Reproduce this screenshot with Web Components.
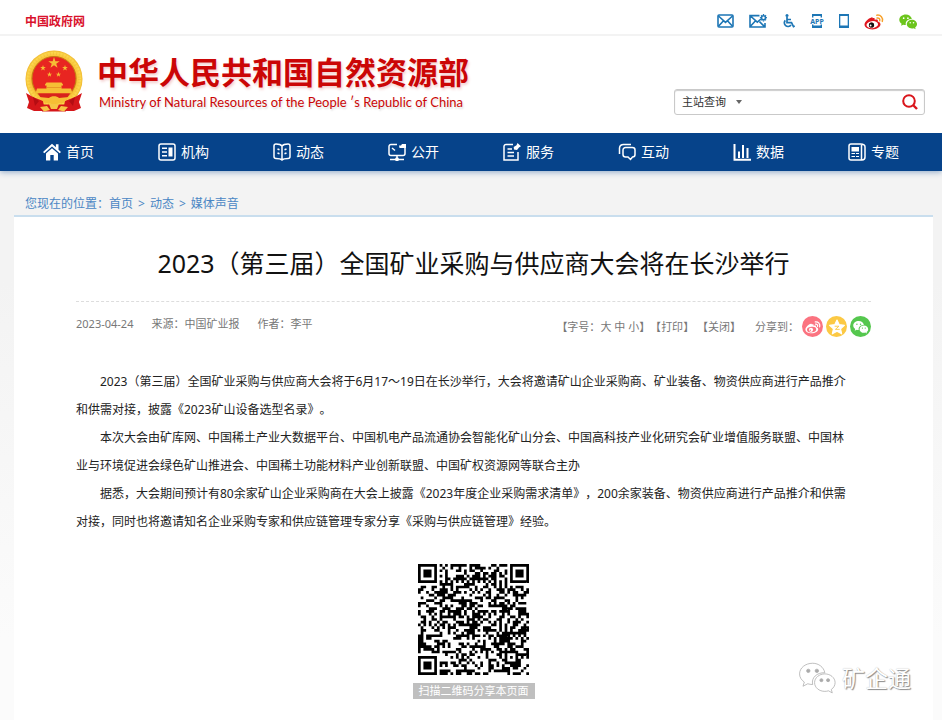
<!DOCTYPE html>
<html lang="zh-CN">
<head>
<meta charset="utf-8">
<title>2023(第三届)全国矿业采购与供应商大会将在长沙举行</title>
<style>
body {
    margin: 0;
    min-height: 100vh;
    display: flex;
    flex-direction: column;
    background: #f3f3f3;
    font: 12px/20px "Noto Sans", "Noto Sans CJK SC", sans-serif;
    color: #333;
    text-spacing-trim: space-all;
}
page-content { flex: 1; }
</style>
</head>
<body>
<top-bar></top-bar>
<site-header></site-header>
<main-nav>
    <nav-item icon="home">首页</nav-item>
    <nav-item icon="org">机构</nav-item>
    <nav-item icon="book">动态</nav-item>
    <nav-item icon="open">公开</nav-item>
    <nav-item icon="service">服务</nav-item>
    <nav-item icon="chat">互动</nav-item>
    <nav-item icon="data">数据</nav-item>
    <nav-item icon="topic">专题</nav-item>
</main-nav>
<page-content>
    <news-article>
        <span slot="title">2023（第三届）全国矿业采购与供应商大会将在长沙举行</span>
        <article-meta slot="meta"></article-meta>
        <article-text>2023（第三届）全国矿业采购与供应商大会将于6月17～19日在长沙举行，大会将邀请矿山企业采购商、矿业装备、物资供应商进行产品推介<br>和供需对接，披露《2023矿山设备选型名录》。</article-text>
        <article-text>本次大会由矿库网、中国稀土产业大数据平台、中国机电产品流通协会智能化矿山分会、中国高科技产业化研究会矿业增值服务联盟、中国林<br>业与环境促进会绿色矿山推进会、中国稀土功能材料产业创新联盟、中国矿权资源网等联合主办</article-text>
        <article-text>据悉，大会期间预计有80余家矿山企业采购商在大会上披露《2023年度企业采购需求清单》，200余家装备、物资供应商进行产品推介和供需<br>对接，同时也将邀请知名企业采购专家和供应链管理专家分享《采购与供应链管理》经验。</article-text>
        <qr-code slot="qr">扫描二维码分享本页面</qr-code>
        <wechat-mark slot="mark">矿企通</wechat-mark>
    </news-article>
</page-content>

<script>
const wechatShape = (bubble, eye) => `
    <path fill="${bubble}" d="M7.2 1C3.3 1 .3 3.5.3 6.6c0 1.8 1 3.3 2.5 4.3l-.7 2.2 2.5-1.3c.8.2 1.6.4 2.6.4-.9-3.6 2.3-6.4 6.4-6.2C13 3 10.3 1 7.2 1z"/>
    <path fill="${bubble}" d="M19 11.2c0-2.6-2.5-4.6-5.4-4.6s-5.4 2-5.4 4.6 2.4 4.6 5.4 4.6c.7 0 1.3-.1 1.9-.3l2 1.100-.5-1.800c1.200-.8 2-2.100 2-3.600z"/>
    <g fill="${eye}"><circle cx="4.9" cy="5" r=".9"/><circle cx="9.4" cy="5" r=".9"/><circle cx="11.8" cy="9.9" r=".8"/><circle cx="15.3" cy="9.9" r=".8"/></g>`;

const weiboShape = (body, inner, wave) => `
    <path fill="${body}" d="M8.5 5.3c1.5-.6 2.6-.1 2.2 1.6 1.9-.7 3.7-.4 3.1 1.5 1.7.5 2.7 1.5 2.7 2.9 0 2.7-3.6 5.1-8.100 5.100S.5 14.300.5 11.500c0-2.400 3.800-6.400 7-7.100 1-.2 1.300.3 1 .9z"/>
    <ellipse cx="8.3" cy="11.7" rx="5.8" ry="3.5" fill="${inner}" transform="rotate(-7 8 12)"/>
    <circle cx="7.5" cy="12" r="2.6" fill="${body}"/>
    <circle cx="6.6" cy="12.6" r=".9" fill="${inner}"/>
    <path fill="none" stroke="${wave}" stroke-width="1.5" stroke-linecap="round" d="M12.8 2.2c3.8-.6 6.6 2.5 5.5 6.2M13.1 5c1.8-.4 3.1 1 2.6 2.7"/>`;

const topIcons = [
    ['邮箱', 17, '0 0 17 14', `<g fill="none" stroke="#1d76b5" stroke-width="1.6"><rect x="1" y="1" width="15" height="12" rx="1"/><path d="M1.5 2 8.5 8.3l7-6.3M1.5 12.3 6.3 7M15.5 12.3 10.7 7"/></g>`],
    ['邮箱设置', 18, '0 0 18 14', `<g fill="none" stroke="#1d76b5" stroke-width="1.6"><path d="M10.5 1.6H1V13h15V9M1.5 2l6.8 6.2L12 5M1.5 12.3 6.3 7M15.3 12.3 10.5 7.7"/><circle cx="14.5" cy="3.7" r="2"/><path stroke-width="1.3" d="M14.5 0v1M14.5 6.5v1M10.9 3.7h1M17.1 3.7h1M12 1.2l.7.7M16.3 5.5l.7.7M12 6.2l.7-.7M16.3 1.9l.7-.7"/></g>`],
    ['无障碍', 13, '0 0 13 14', `<circle cx="5" cy="1.5" r="1.5" fill="#1d76b5"/><g fill="none" stroke="#1d76b5" stroke-width="1.7"><path d="M5 3v5.6h4.5l2 4 1.3-.6M5 5.500h4M3.300 6.300A3.700 3.700 0 1 0 9 11"/></g>`],
    ['手机应用', 14, '0 0 14 14', `<g fill="none" stroke="#1d76b5" stroke-width="1.4"><path d="M2.7 3.5V.8h8.6v2.7M2.7 10.5v2.7h8.6v-2.7"/></g><path fill="#1d76b5" d="M2 11.5h10V14H2zM2 0h10v2H2z"/><text x="7" y="9.500" text-anchor="middle" font-family="Noto Sans, sans-serif" font-size="7" font-weight="700" fill="#1d76b5">APP</text>`],
    ['手机版', 10, '0 0 10 14', `<path fill="#1d76b5" fill-rule="evenodd" d="M0 0h10v14H0zM1.3 2v9.5h7.4V2z"/>`],
    ['微博', 20, '0 0 20 17', weiboShape('#e0161e', '#fff', '#f7a12b') + '<circle cx="7.5" cy="12" r="2.6" fill="#111"/><circle cx="6.6" cy="12.5" r=".9" fill="#fff"/>'],
    ['微信', 19, '0 0 20 17', wechatShape('#6cc51c', '#fff')]
];

class TopBar extends HTMLElement {
    constructor() {
        super();
        this.attachShadow({ mode: 'open' }).innerHTML = `
        <style>
        :host {
            display: flex;
            justify-content: space-between;
            align-items: center;
            height: 36px;
            padding: 8px 24px 0 25px;
            box-sizing: border-box;
            background: #fff;
            border-bottom: 2px solid #f3f3f3;
        }
        a { text-decoration: none; }
        .gov { font-family: "Noto Sans CJK SC", sans-serif; font-weight: 600; color: #d9122c; }
        .icons { display: flex; align-items: center; gap: 15px; }
        .icons a { display: flex; }
        </style>
        <a class="gov" href="#">中国政府网</a>
        <div class="icons">
            ${topIcons.map(([label, w, box, shape]) => `
            <a href="#" aria-label="${label}"><svg width="${w}" height="${box.split(' ')[3]}" viewBox="${box}">${shape}</svg></a>`).join('')}
        </div>`;
    }
}
customElements.define('top-bar', TopBar);

class NationalEmblem extends HTMLElement {
    constructor() {
        super();
        const star = 'M0-1 .23-.31.95-.31.37.12.59.81 0 .39-.59.81-.37.12-.95-.31-.23-.31z';
        this.attachShadow({ mode: 'open' }).innerHTML = `
        <style>
        :host { display: block; }
        svg { display: block; }
        </style>
        <svg width="58" height="62" viewBox="0 0 58 62" role="img" aria-label="国徽">
            <defs>
                <radialGradient id="gold"><stop offset=".74" stop-color="#d9991a"/><stop offset=".82" stop-color="#f9c53a"/><stop offset=".93" stop-color="#fcd84e"/><stop offset="1" stop-color="#efb52c"/></radialGradient>
            </defs>
            <circle cx="29" cy="29" r="28.5" fill="url(#gold)"/>
            <circle cx="29" cy="29" r="25.5" fill="none" stroke="#e7a827" stroke-width="3" stroke-dasharray="1 2.2" opacity=".3"/>
            <circle cx="29" cy="28.5" r="22" fill="#e82521" stroke="#c57b14"/>
            <g fill="#f6be35">
                <path d="${star}" transform="translate(29 13) scale(6)"/>
                <path d="${star}" transform="translate(18 18) scale(3)"/>
                <path d="${star}" transform="translate(40 18) scale(3)"/>
                <path d="${star}" transform="translate(24.5 24.5) scale(2.8)"/>
                <path d="${star}" transform="translate(33.5 24.5) scale(2.8)"/>
                <path d="M20 34.500l1.500-2h15l1.500 2v1h-1.500v3H46l1.500 5h-37l1.500-5h9.500v-3H20z"/>
            </g>
            <path d="M21.500 37.500h15" stroke="#e28a20" stroke-width=".7"/>
            <path fill="#d8221c" d="M13 43.500h32l-4 6H17z"/>
            <path fill="#d5161a" d="M1 43l7 4 10 4 2 10H9l-7-3 2-6zM57 43l-7 4-10 4-2 10h11l7-3-2-6z"/>
            <path fill="#b50d12" d="M8 47l6 4-4 5zM50 47l-6 4 4 5z"/>
            <path fill="#f6be35" d="M14 47l10 1c2-2.500 8-2.500 10 0l10-1-6 6h-5c-2 2-6 2-8 0h-5z"/>
            <path fill="#d5161a" d="M17 54.500h24v7H17z"/>
            <path fill="#f6c545" d="M15 57l7-1 3 4-6 1.500zM43 57l-7-1-3 4 6 1.500zM24 54h10l-2 5h-6z"/>
        </svg>`;
    }
}
customElements.define('national-emblem', NationalEmblem);

class SearchBox extends HTMLElement {
    constructor() {
        super();
        this.attachShadow({ mode: 'open' }).innerHTML = `
        <style>
        :host { display: block; width: 251px; }
        form {
            display: flex;
            align-items: center;
            height: 26px;
            margin: 0;
            box-sizing: border-box;
            background: #fff;
            border: 1px solid #c9c9c9;
            border-radius: 3px;
            box-shadow: inset 0 1px 1px #ccc;
        }
        .pick { display: flex; align-items: center; padding-left: 7px; }
        select {
            appearance: none;
            border: none;
            outline: none;
            padding: 0;
            width: 54px;
            background: none;
            font: 11px/20px "Noto Sans", "Noto Sans CJK SC", sans-serif;
            color: #333;
        }
        .arrow {
            border: 3px solid transparent;
            border-top: 4px solid #666;
            border-bottom: none;
            pointer-events: none;
        }
        input { flex: 1; min-width: 0; border: none; outline: none; background: none; }
        button { display: flex; border: none; background: none; padding: 0 6px; }
        </style>
        <form>
            <label class="pick"><select aria-label="查询范围"><option>主站查询</option></select><span class="arrow"></span></label>
            <input type="text" aria-label="关键词">
            <button type="button" aria-label="搜索"><svg width="16" height="16" viewBox="0 0 16 16"><g fill="none" stroke="#d9151b" stroke-width="2"><circle cx="7" cy="7" r="5.8"/><path stroke-width="2.4" d="M11 11l4 4"/></g></svg></button>
        </form>`;
    }
}
customElements.define('search-box', SearchBox);

class SiteHeader extends HTMLElement {
    constructor() {
        super();
        this.attachShadow({ mode: 'open' }).innerHTML = `
        <style>
        :host {
            display: flex;
            justify-content: space-between;
            align-items: flex-start;
            padding: 14px 17px 0 25px;
            height: 97px;
            box-sizing: border-box;
            background: #fff;
        }
        .logo { display: flex; gap: 14px; color: #cb0606; white-space: nowrap; }
        h1 {
            margin: 0;
            font: bold 31px/42px "Noto Sans CJK SC", sans-serif;
            text-shadow: 1px 2px 3px #f3cccc;
        }
        p {
            margin: 0;
            padding-left: 2px;
            font: 13px/20px Lato, sans-serif;
            text-shadow: 1px 2px 2px #ddd;
        }
        search-box { margin-top: 39px; }
        </style>
        <div class="logo">
            <national-emblem></national-emblem>
            <div>
                <h1>中华人民共和国自然资源部</h1>
                <p>Ministry of Natural Resources of the People ′s Republic of China</p>
            </div>
        </div>
        <search-box></search-box>`;
    }
}
customElements.define('site-header', SiteHeader);

const navIcons = {
    home: '<path fill="#fff" stroke="none" d="M9 .8 0 9l1.3 1.3L9 3.5l7.7 6.8L18 9l-2.5-2.3V1.2h-2.6v3.1z"/><path fill="#fff" stroke="none" d="M9 5.2 3 10.5V17.5h4.3V12h3.4v5.5H15v-7z"/>',
    org: '<rect x="1" y="1" width="16" height="16" rx="2"/><path d="M4 5.2h5M4 9h5M4 12.8h5"/><path fill="#fff" stroke="none" d="M10.5 4.5h4v9h-4z"/>',
    book: '<path d="M9 3C7.500 1 5 1 3 1a2 2 0 0 0-2 2v10.500a2 2 0 0 0 2 2c2 0 4.500 0 6 1.500 1.500-1.500 4-1.500 6-1.500a2 2 0 0 0 2-2V3a2 2 0 0 0-2-2c-2 0-4.500 0-6 2zM9 3v14M4.500 6l2 .8M4.500 10l2 .8M13.500 6l-2 .8M13.500 10l-2 .8"/>',
    open: '<path d="M9 1.5H3a2 2 0 0 0-2 2v7a2 2 0 0 0 2 2h12a2 2 0 0 0 2-2V5M4 5l3 2.5M9 13v3M2 16.500h14"/><path fill="#fff" stroke="none" d="M11 2.500h2l1-1.500h4v4h-6.500z"/><circle cx="9" cy="16.3" r="1.2" fill="#fff"/>',
    service: '<path d="M10 1.500H3a2 2 0 0 0-2 2V17h14V9M4.500 6H9M4.500 9.500h6.500M4.500 13h6.500"/><path fill="#fff" stroke="none" d="M14.500 0l3.500 3.300-2 1.200-2 2.500-3-.5-.3-2.500 2.800-1.700z"/>',
    chat: '<path d="M1.5 11V5a4 4 0 0 1 4-3.5H13"/><path d="M7.5 4.5h7A2.5 2.5 0 0 1 17 7v4.500a2.500 2.500 0 0 1-2.500 2.500L12.500 16.500 10 14H7.500A2.500 2.500 0 0 1 5 11.500V7a2.500 2.500 0 0 1 2.500-2.500z"/>',
    data: '<path stroke-width="2" d="M1.5 1v15.8H18M6 8.500V15M10 2v13M14.500 5v10"/>',
    topic: '<path d="M12.500 1H3a2 2 0 0 0-2 2v12a2 2 0 0 0 2 2h11a3 3 0 0 0 3-3V4c0-2-2-3-4.500-3M13.500 1v16"/><path fill="#fff" stroke="none" d="M3.500 4h7.500v4.500H3.500zM3.500 10H7v1H3.500zM8 10h3v1H8zM3.500 13H7v1H3.500zM8 13h3v1H8z"/>'
};

class NavItem extends HTMLElement {
    constructor() {
        super();
        this.attachShadow({ mode: 'open' }).innerHTML = `
        <style>
        :host { display: block; }
        a {
            display: flex;
            justify-content: center;
            align-items: center;
            gap: 5px;
            height: 38px;
            color: #fff;
            font-size: 14px;
            text-decoration: none;
        }
        svg { fill: none; stroke: #fff; stroke-width: 1.5; }
        </style>
        <a href="#"><svg width="18" height="18" viewBox="0 0 18 18">${navIcons[this.getAttribute('icon')]}</svg><slot></slot></a>`;
    }
}
customElements.define('nav-item', NavItem);

class MainNav extends HTMLElement {
    constructor() {
        super();
        this.attachShadow({ mode: 'open' }).innerHTML = `
        <style>
        :host {
            display: block;
            position: relative;
            padding: 0 11px;
            background: #06438a;
            box-shadow: 0 1px 6px #8ba6c6;
            clip-path: inset(0 0 -10px 0);
        }
        nav { display: grid; grid-template-columns: repeat(8, 1fr); }
        </style>
        <nav><slot></slot></nav>`;
    }
}
customElements.define('main-nav', MainNav);

class PageContent extends HTMLElement {
    constructor() {
        super();
        this.attachShadow({ mode: 'open' }).innerHTML = `
        <style>
        :host {
            display: flex;
            flex-direction: column;
            padding: 23px 9px 0 14px;
            background: linear-gradient(#f3f3f3 20%, #fbfbfb 85%);
        }
        .crumbs { display: flex; gap: 5px; padding: 0 11px 1px; color: #4a86c4; }
        .crumbs a { color: inherit; text-decoration: none; }
        ::slotted(news-article) { flex: 1; }
        </style>
        <div class="crumbs"><span>您现在的位置：<a href="#">首页</a></span><span>&gt;</span><a href="#">动态</a><span>&gt;</span><a href="#">媒体声音</a></div>
        <slot></slot>`;
    }
}
customElements.define('page-content', PageContent);

class ShareButton extends HTMLElement {
    constructor() {
        super();
        const kinds = {
            weibo: ['#fb7380', '微博', '0 0 20 17', weiboShape('#fff', '#fb7380', '#fff')],
            star: ['#fcc944', 'QQ空间', '0 0 20 18', '<path fill="#fff" stroke="#fff" stroke-width="1.5" stroke-linejoin="round" d="M10 0l2.9 6 6.600.8-4.900 4.500 1.400 6.500L10 14.500l-6 3.300 1.400-6.500L.5 6.800 7.100 6z"/><path fill="none" stroke="#fcc944" stroke-width="1.2" d="M7 8h5.500l-4.500 4h5.500"/>'],
            wechat: ['#55c74e', '微信', '0 0 20 17', wechatShape('#fff', '#55c74e')]
        };
        const [color, label, box, shape] = kinds[this.getAttribute('kind')];
        this.attachShadow({ mode: 'open' }).innerHTML = `
        <style>
        :host { display: block; }
        button {
            display: flex;
            justify-content: center;
            align-items: center;
            width: 21px;
            height: 21px;
            padding: 0;
            border: none;
            border-radius: 50%;
            background: ${color};
        }
        svg { overflow: visible; }
        </style>
        <button type="button" aria-label="${label}"><svg width="16" height="14" viewBox="${box}">${shape}</svg></button>`;
    }
}
customElements.define('share-button', ShareButton);

class ArticleMeta extends HTMLElement {
    constructor() {
        super();
        this.attachShadow({ mode: 'open' }).innerHTML = `
        <style>
        :host {
            display: flex;
            justify-content: space-between;
            align-items: flex-start;
            padding-top: 12px;
            font-size: 11px;
            color: #777;
            white-space: nowrap;
        }
        a { color: inherit; text-decoration: none; }
        .from { display: flex; gap: 18px; }
        .tools { display: flex; align-items: center; padding-top: 2px; }
        .share { display: flex; align-items: center; gap: 3px; padding-left: 14px; }
        </style>
        <div class="from"><span>2023-04-24</span><span>来源：中国矿业报</span><span>作者：李平</span></div>
        <div class="tools">
            <span>【字号：<a href="#">大</a> <a href="#">中</a> <a href="#">小</a>】【<a href="#">打印</a>】 【<a href="#">关闭</a>】</span>
            <div class="share">
                <span>分享到：</span>
                <share-button kind="weibo"></share-button>
                <share-button kind="star"></share-button>
                <share-button kind="wechat"></share-button>
            </div>
        </div>`;
    }
}
customElements.define('article-meta', ArticleMeta);

class ArticleText extends HTMLElement {
    constructor() {
        super();
        this.attachShadow({ mode: 'open' }).innerHTML = `
        <style>
        :host { display: block; }
        p { margin: 0; text-indent: 24px; line-height: 28px; color: #222; }
        </style>
        <p><slot></slot></p>`;
    }
}
customElements.define('article-text', ArticleText);

class QrCode extends HTMLElement {
    constructor() {
        super();
        const n = 41;
        let seed = 20230424;
        let path = '';
        const inBox = (x, y, bx, by, s) => x >= bx && x < bx + s && y >= by && y < by + s;
        const corners = [[0, 0], [n - 7, 0], [0, n - 7]];
        for (let y = 0; y < n; y++) {
            for (let x = 0; x < n; x++) {
                seed = (seed * 1103515245 + 12345) % 2147483648;
                let on = (seed >> 12) % 100 < 51;
                if (x === 6 || y === 6) on = (x + y) % 2 === 0;
                if (inBox(x, y, 32, 32, 5)) {
                    const d = Math.max(Math.abs(x - 34), Math.abs(y - 34));
                    on = d !== 1;
                }
                corners.forEach(([cx, cy]) => {
                    if (!inBox(x, y, cx - 1, cy - 1, 9)) return;
                    const d = Math.max(Math.abs(x - cx - 3), Math.abs(y - cy - 3));
                    on = d === 3 || d < 2;
                });
                if (on) path += `M${x} ${y}h1v1h-1z`;
            }
        }
        this.attachShadow({ mode: 'open' }).innerHTML = `
        <style>
        :host { display: flex; flex-direction: column; align-items: center; }
        svg { display: block; }
        .tip {
            margin-top: 8px;
            padding: 0 6px;
            background: #bfbfbf;
            color: #fff;
            font-size: 11px;
            line-height: 16px;
        }
        </style>
        <svg width="111" height="111" viewBox="0 0 ${n} ${n}" role="img" aria-label="二维码"><path d="${path}"/></svg>
        <div class="tip"><slot></slot></div>`;
    }
}
customElements.define('qr-code', QrCode);

class WechatMark extends HTMLElement {
    constructor() {
        super();
        this.attachShadow({ mode: 'open' }).innerHTML = `
        <style>
        :host {
            display: flex;
            align-items: center;
            gap: 5px;
            color: #fff;
            font-size: 23px;
            line-height: 32px;
            text-shadow: 1px 1px 1px #888, 0 0 1px #bbb;
        }
        </style>
        <svg width="38" height="33" viewBox="0 0 20 17" stroke="#aaa" stroke-width=".4">${wechatShape('#fff', '#aaa')}</svg>
        <slot></slot>`;
    }
}
customElements.define('wechat-mark', WechatMark);

class NewsArticle extends HTMLElement {
    constructor() {
        super();
        this.attachShadow({ mode: 'open' }).innerHTML = `
        <style>
        :host {
            display: block;
            position: relative;
            padding: 28px 62px 19px;
            background: #fff;
            border-top: 2px solid #c9deee;
        }
        h2 {
            margin: 0;
            padding-bottom: 20px;
            border-bottom: 1px dashed #ddd;
            font-size: 25px;
            font-weight: 400;
            line-height: 36px;
            text-align: center;
            color: #111;
        }
        .text { padding: 31px 0 28px; }
        /* watermark lies over the lower right corner */
        .mark { position: absolute; right: 22px; bottom: 26px; }
        </style>
        <h2><slot name="title"></slot></h2>
        <slot name="meta"></slot>
        <div class="text"><slot></slot></div>
        <slot name="qr"></slot>
        <div class="mark"><slot name="mark"></slot></div>`;
    }
}
customElements.define('news-article', NewsArticle);
</script>
</body>
</html>
